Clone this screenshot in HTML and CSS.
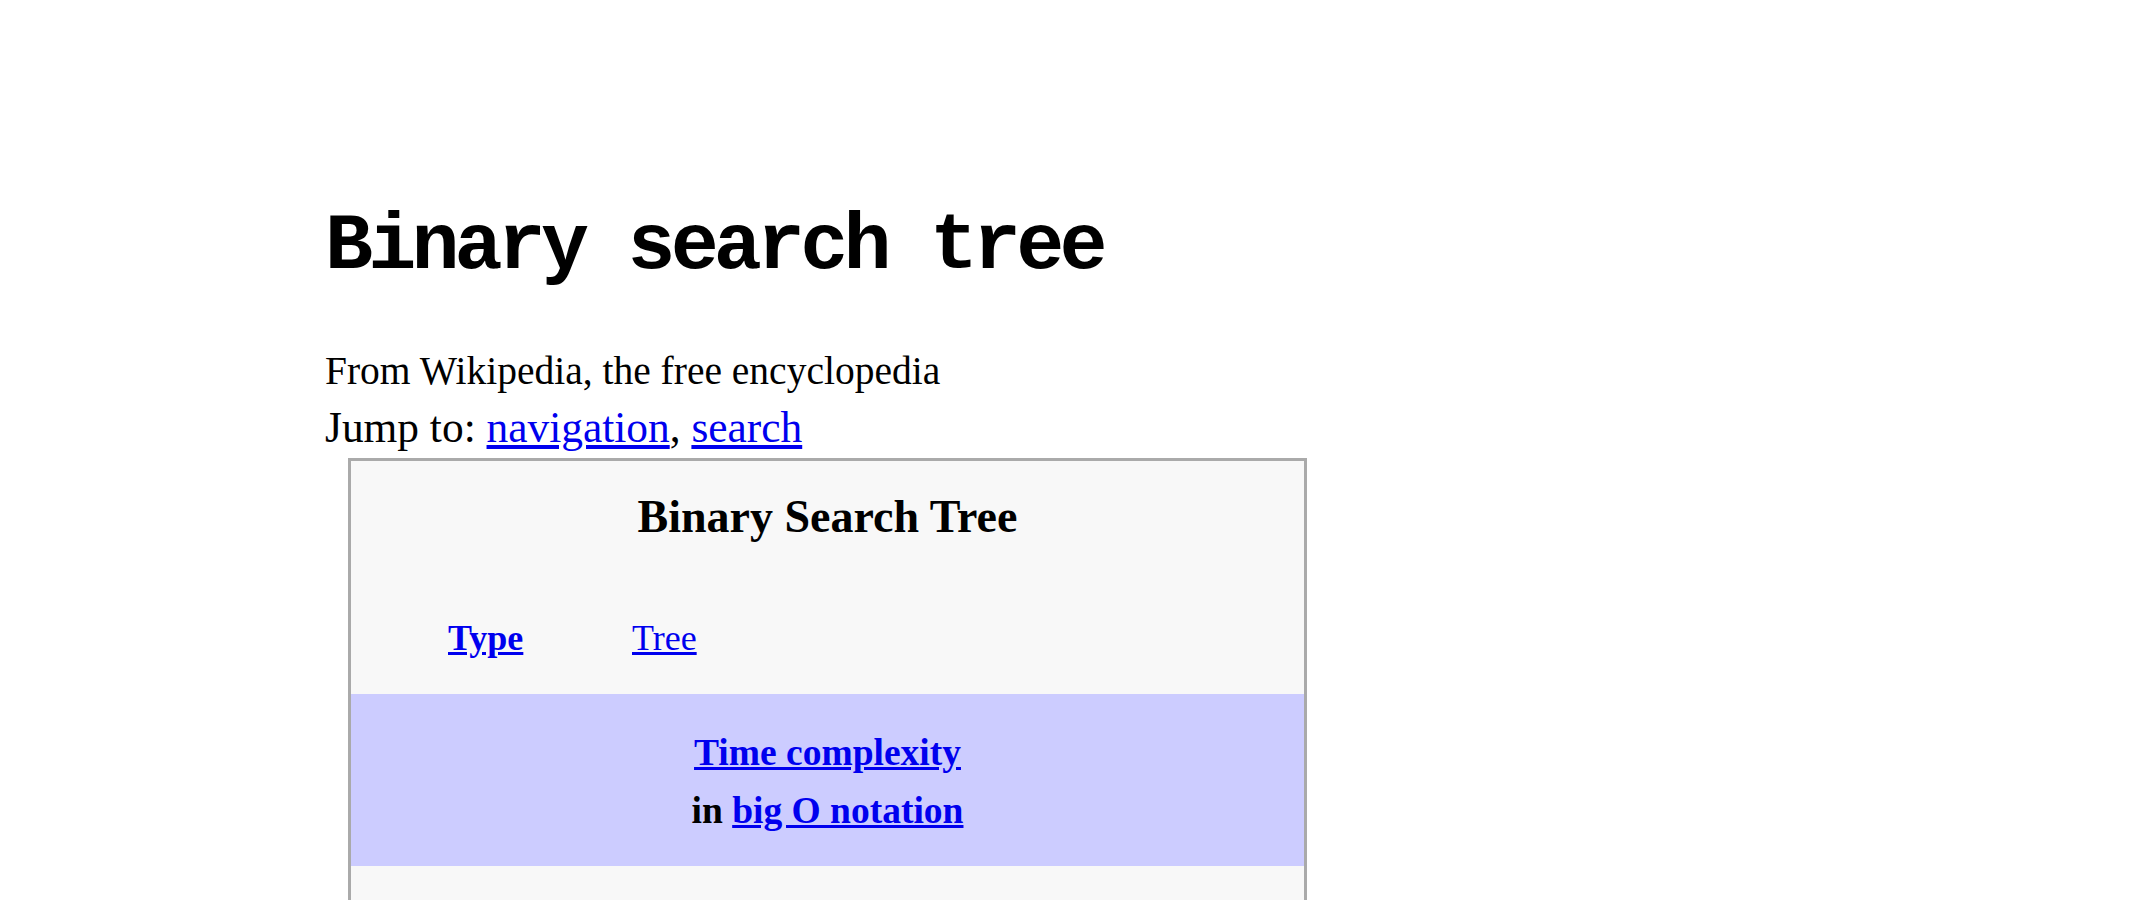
FILE: index.html
```html
<!DOCTYPE html>
<html lang="en">
<head>
<meta charset="utf-8">
<title>Binary search tree - Wikipedia</title>
<link rel="stylesheet" href="styles.css">
</head>
<body>
<div class="content">
  <h1 class="title">Binary search tree</h1>
  <div class="tagline">From Wikipedia, the free encyclopedia</div>
  <div class="jump">Jump to: <a href="#nav">navigation</a>, <a href="#search">search</a></div>
  <div class="infobox">
    <div class="caption">Binary Search Tree</div>
    <div class="row">
      <div class="label"><a href="#type">Type</a></div>
      <div class="value"><a href="#tree">Tree</a></div>
    </div>
    <div class="band">
      <div><a href="#tc">Time complexity</a></div>
      <div>in <a href="#bigo">big O notation</a></div>
    </div>
    <div class="rest"></div>
  </div>
</div>
</body>
</html>
```
FILE: styles.css
```css
html, body {
  margin: 0;
  padding: 0;
  background: #ffffff;
  color: #000000;
  font-family: "Liberation Serif", "Times New Roman", serif;
}

a {
  color: #0000ee;
  text-decoration: underline;
}

.content {
  padding: 207px 0 0 325px;
}

.title {
  margin: 0;
  font-family: "Liberation Mono", "Courier New", monospace;
  font-weight: bold;
  font-size: 80px;
  letter-spacing: -4.8px;
  line-height: 80px;
}

.tagline {
  margin-top: 56px;
  font-size: 39.5px;
  line-height: 56px;
}

.jump {
  font-size: 43.4px;
  line-height: 57px;
}

.infobox {
  margin: 2px 0 0 23px;
  width: 953px;
  border: 3px solid #aaaaaa;
  background: #f8f8f8;
}

.caption {
  padding-top: 26px;
  font-weight: bold;
  font-size: 46px;
  line-height: 60px;
  text-align: center;
}

.row {
  display: grid;
  grid-template-columns: 281px 1fr;
  padding: 67px 0 32px;
  font-size: 36px;
  line-height: 48px;
}

.label {
  padding-left: 97px;
  font-weight: bold;
}

.band {
  background: #ccccff;
  padding: 30px 0 26px;
  text-align: center;
  font-weight: bold;
  font-size: 37.5px;
  line-height: 58px;
}

.rest {
  height: 120px;
}
```
